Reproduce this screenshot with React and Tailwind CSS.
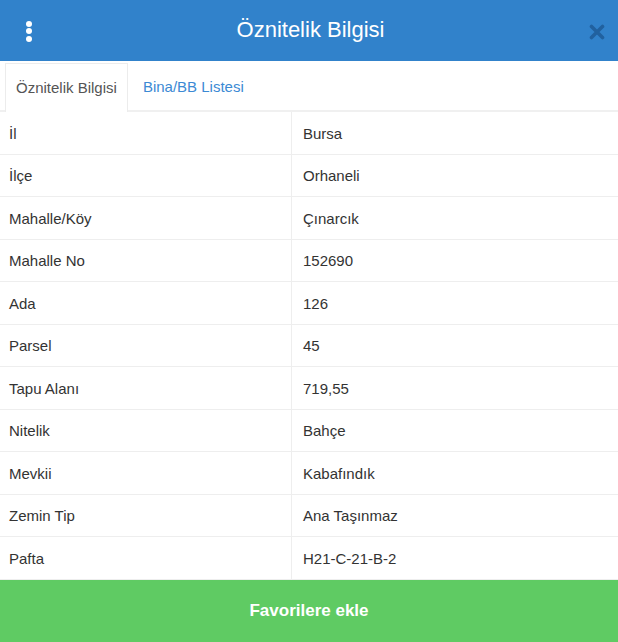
import React from "react";

const rows = [
  ["İl", "Bursa"],
  ["İlçe", "Orhaneli"],
  ["Mahalle/Köy", "Çınarcık"],
  ["Mahalle No", "152690"],
  ["Ada", "126"],
  ["Parsel", "45"],
  ["Tapu Alanı", "719,55"],
  ["Nitelik", "Bahçe"],
  ["Mevkii", "Kabafındık"],
  ["Zemin Tip", "Ana Taşınmaz"],
  ["Pafta", "H21-C-21-B-2"],
];

export default function App() {
  return (
    <div
      className="w-[618px] h-[642px] flex flex-col bg-white overflow-hidden"
      style={{ fontFamily: '"Liberation Sans", Arial, sans-serif' }}
    >
      {/* header bar */}
      <div className="h-[61px] shrink-0 bg-[#3182cb] flex items-center justify-between px-[26px] pr-[13px]">
        <div className="flex flex-col gap-[1.5px] w-[6px] mt-[1px]">
          <span className="block w-[6px] h-[6px] rounded-full bg-white" />
          <span className="block w-[6px] h-[6px] rounded-full bg-white" />
          <span className="block w-[6px] h-[6px] rounded-full bg-white" />
        </div>
        <div className="text-white text-[22px] leading-none mb-[2px]">Öznitelik Bilgisi</div>
        <svg width="16" height="16" viewBox="0 0 16 16" className="mt-[2px]">
          <path d="M2.5 2.5 L13.5 13.5 M13.5 2.5 L2.5 13.5" stroke="#21619f" strokeWidth="3.6" strokeLinecap="round" />
        </svg>
      </div>

      {/* tabs */}
      <div className="h-[51px] shrink-0 flex items-end pl-[5px] border-b-2 border-[#f0f0f0]">
        <div className="h-[49px] -mb-[2px] bg-white border border-b-0 border-[#ececec] px-[10px] pt-[1px] flex items-center text-[15px] text-[#555]">
          Öznitelik Bilgisi
        </div>
        <div className="h-[47px] ml-[5px] px-[10px] pt-[1px] flex items-center text-[15px] text-[#3c8ad4]">
          Bina/BB Listesi
        </div>
      </div>

      {/* attribute table */}
      <div className="flex-1 flex flex-col">
        {rows.map(([k, v]) => (
          <div key={k} className="flex border-b border-[#eeeeee] text-[15px] text-[#333] leading-[21.55px]">
            <div className="w-[292px] shrink-0 pt-[10.5px] pb-[9.5px] pl-[9px] border-r border-[#eeeeee]">{k}</div>
            <div className="flex-1 pt-[10.5px] pb-[9.5px] pl-[11px]">{v}</div>
          </div>
        ))}
      </div>

      {/* action button */}
      <div className="h-[62px] shrink-0 bg-[#5fcb63] flex items-center justify-center text-white text-[17px] font-bold">
        Favorilere ekle
      </div>
    </div>
  );
}
